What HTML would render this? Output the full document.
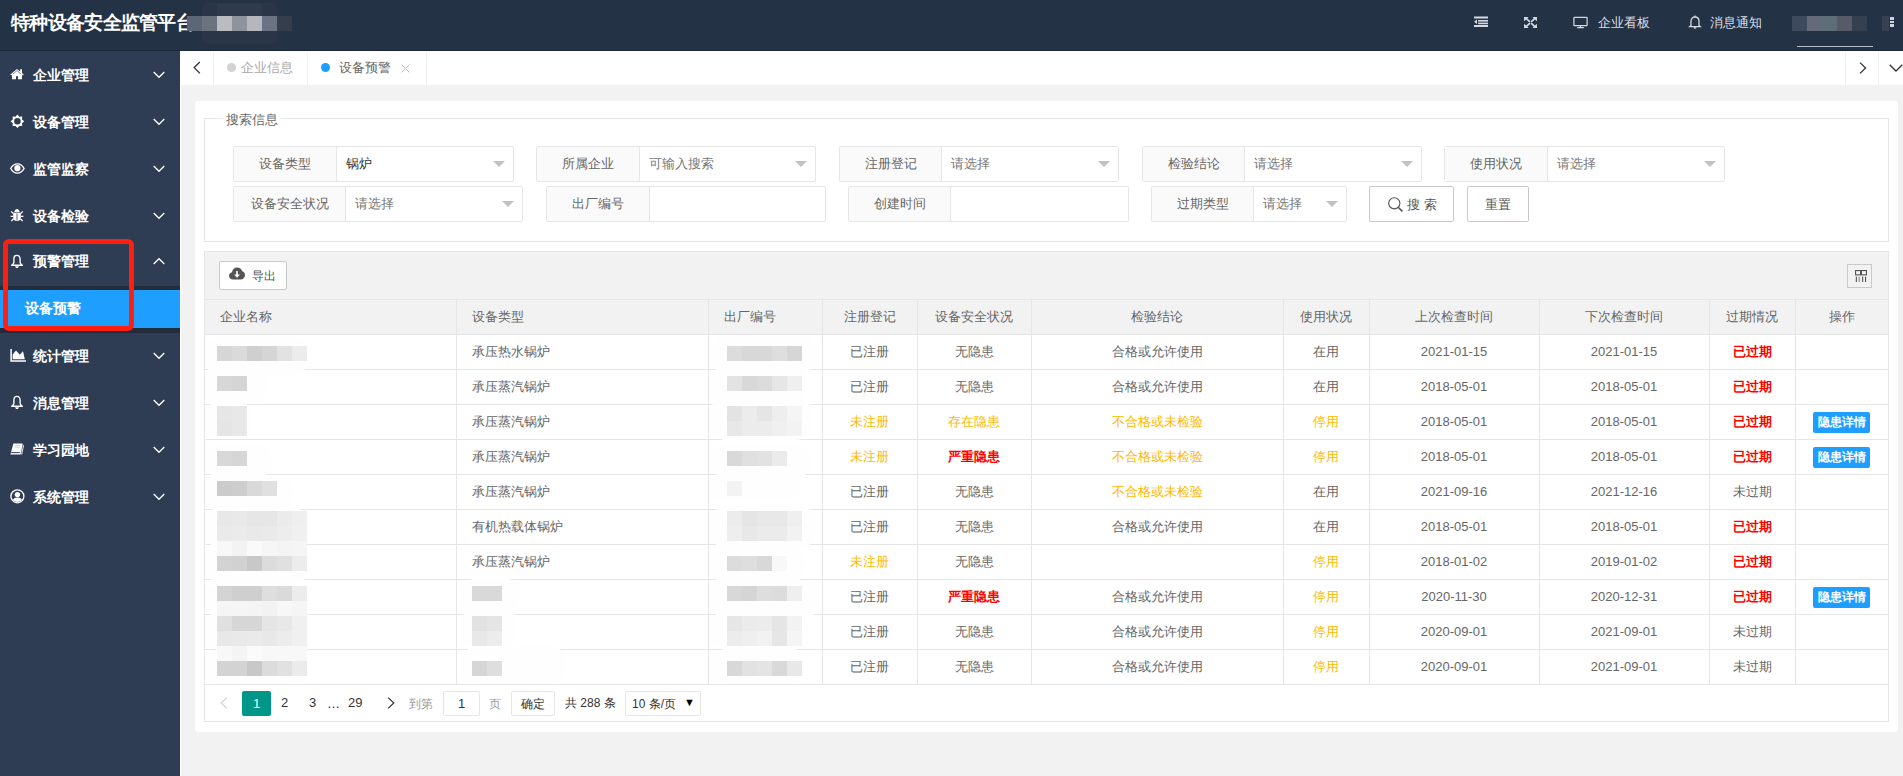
<!DOCTYPE html>
<html><head><meta charset="utf-8"><title>特种设备安全监管平台</title>
<style>
*{margin:0;padding:0;box-sizing:border-box}
html,body{width:1903px;height:776px;overflow:hidden;background:#f2f2f2;font-family:"Liberation Sans",sans-serif;font-size:13px;color:#666}
div,span,svg{position:absolute}
.nw{white-space:nowrap}
#hdr{left:0;top:0;width:1903px;height:51px;background:#243246;border-bottom:1px solid #1d2838}
#title{left:11px;top:10px;font-size:19px;font-weight:bold;color:#fff;line-height:26px;white-space:nowrap;letter-spacing:-0.7px}
.ht{color:#d9dde3;font-size:13px;line-height:20px;top:13px;white-space:nowrap}
#side{left:0;top:51px;width:180px;height:725px;background:#2f3d54}
.mi{left:0;width:180px;height:47px;color:#fff;font-size:14px;font-weight:bold}
.mi .t{left:33px;top:13px;line-height:22px;white-space:nowrap}
.mi svg.ic{}
.mi svg.ch{left:153px;top:20px}
#tabs{left:180px;top:51px;width:1723px;height:34px;background:#fff}
.sep{top:1px;width:1px;height:33px;background:#f0f0f0}
#card{left:195px;top:101px;width:1703px;height:631px;background:#fff;border-radius:3px}
.fs{left:9px;top:17px;width:1685px;height:124px;border:1px solid #e6e6e6}
.lg{left:21px;top:8px;padding:0 10px 0 10px;background:#fff;color:#666;font-size:13px;line-height:18px}
.fl{height:36px;border:1px solid #e6e6e6;border-radius:2px;background:#fff}
.fl .lb{left:0;top:0;height:34px;background:#fafafa;border-right:1px solid #e6e6e6;color:#666;text-align:center;line-height:34px;font-size:13px;white-space:nowrap}
.fl .v{top:0;line-height:34px;font-size:13px;color:#999;white-space:nowrap}
.tri{width:0;height:0;border-left:6px solid transparent;border-right:6px solid transparent;border-top:6px solid #c2c2c2;top:14px}
.btn{height:36px;border:1px solid #c9c9c9;border-radius:2px;background:#fff;color:#555;font-size:13px;line-height:34px;text-align:center;white-space:nowrap}
#tb{left:9px;top:150px;width:1685px;height:48px;background:#f2f2f2;border:1px solid #e6e6e6;border-bottom:none}
.th{top:198px;height:36px;background:#f2f2f2;border-top:1px solid #e6e6e6;border-bottom:1px solid #e6e6e6;color:#666;line-height:34px;white-space:nowrap}
.td{height:35px;border-bottom:1px solid #e6e6e6;line-height:34px;color:#666;white-space:nowrap}
.vl{width:1px;background:#e6e6e6}
.c{text-align:center}
.o{color:#ffb800}
.r{color:#ff0000;font-weight:bold}
.bd{height:21px;width:57px;background:#1e9fff;color:#fff;border-radius:2px;font-size:12px;line-height:21px;text-align:center;font-weight:bold;white-space:nowrap}
.bl{width:15px;height:15px}
.pg{color:#333;font-size:13px;line-height:24px;white-space:nowrap}
</style></head><body>

<div id="hdr">
<div id="title">特种设备安全监管平台</div>
<div style="left:202px;top:3px;width:75px;height:41px;background:#2a3648;border-radius:6px"></div>
<div style="left:217px;top:3px;width:45px;height:13px;background:#2f3b4d"></div>
<div style="left:187px;top:16px;width:15px;height:15px;background:#5d6676"></div>
<div style="left:202px;top:16px;width:15px;height:15px;background:#6b737f"></div>
<div style="left:217px;top:16px;width:15px;height:15px;background:#b9bcc0"></div>
<div style="left:232px;top:16px;width:15px;height:15px;background:#8e939c"></div>
<div style="left:247px;top:16px;width:15px;height:15px;background:#b4b7be"></div>
<div style="left:262px;top:16px;width:15px;height:15px;background:#6a7381"></div>
<div style="left:277px;top:16px;width:15px;height:15px;background:#343e4d"></div>
<svg style="left:1474px;top:16px" width="15" height="12" viewBox="0 0 15 12"><g fill="#d5d9df"><rect x="0" y="0.5" width="14" height="2"/><rect x="4" y="4" width="10" height="1.6"/><rect x="4" y="6.6" width="10" height="1.6"/><rect x="0" y="9" width="14" height="2"/><path d="M0 5.8 L3 3.6 L3 8 Z"/></g></svg>
<svg style="left:1524px;top:17px" width="13" height="11" viewBox="0 0 13 11"><g fill="#d5d9df"><path d="M0 0h4.6L3.3 1.3 6.5 4.2 5.3 5.4 2.1 2.5.1 4.3z"/><path d="M13 0H8.4l1.3 1.3L6.5 4.2l1.2 1.2 3.2-2.9 2 1.8z"/><path d="M0 11h4.6L3.3 9.7 6.5 6.8 5.3 5.6 2.1 8.5.1 6.7z"/><path d="M13 11H8.4l1.3-1.3L6.5 6.8l1.2-1.2 3.2 2.9 2-1.8z"/></g></svg>
<svg style="left:1573px;top:16px" width="15" height="13" viewBox="0 0 15 13"><g fill="none" stroke="#d5d9df" stroke-width="1.2"><rect x="0.9" y="1.3" width="13.2" height="8.4" rx=".6"/><path d="M7.5 9.7v1.8M4.2 11.6h6.6"/></g></svg>
<div class="ht" style="left:1598px">企业看板</div>
<svg style="left:1688px;top:15px" width="14" height="14" viewBox="0 0 14 14"><g fill="none" stroke="#d5d9df" stroke-width="1.3"><path d="M3 10.5V6.3C3 3.8 4.7 2 7 2s4 1.8 4 4.3v4.2l1.3 1.2H1.7z"/><path d="M7 .6v1.4"/></g><path d="M5.5 12.3h3a1.5 1.5 0 0 1-3 0z" fill="#d5d9df"/></svg>
<div class="ht" style="left:1710px">消息通知</div>
<div style="left:1792px;top:16px;width:15px;height:15px;background:#3d4a5e"></div>
<div style="left:1807px;top:16px;width:15px;height:15px;background:#636b7b"></div>
<div style="left:1822px;top:16px;width:15px;height:15px;background:#5e6e78"></div>
<div style="left:1837px;top:16px;width:15px;height:15px;background:#555b69"></div>
<div style="left:1852px;top:16px;width:15px;height:15px;background:#343f4f"></div>
<div style="left:1882px;top:16px;width:7px;height:15px;background:#364253"></div>
<div style="left:1890px;top:17px;width:4px;height:3px;background:#cfd4da"></div>
<div style="left:1890px;top:21px;width:4px;height:2px;background:#cfd4da"></div>
<div style="left:1890px;top:24px;width:4px;height:3px;background:#cfd4da"></div>
<div style="left:1797px;top:46px;width:76px;height:1px;background:#b8bec8"></div>
</div>
<div id="side">
<svg class="ic" style="left:10px;top:17px" width="14" height="12" viewBox="0 0 14 12"><path d="M7 .9 .3 6.6l.8.9L2 6.7V11.2h4V8.3h2v2.9h4V6.7l.9.8.8-.9L12 5.1V1.3h-1.8v2.2z" fill="#fff"/><path d="M7 2.6 2.9 6.1" stroke="#2f3d54" stroke-width=".6" fill="none"/><path d="M7 2.6 11.1 6.1" stroke="#2f3d54" stroke-width=".6" fill="none"/></svg>
<div class="mi" style="top:0px"><span class="t">企业管理</span><svg class="ch" width="12" height="8" viewBox="0 0 12 8"><path d="M.7 1 6 6.3 11.3 1" fill="none" stroke="#fff" stroke-width="1.3"/></svg></div>
<svg class="ic" style="left:10px;top:63px" width="15" height="15" viewBox="0 0 15 15"><path fill-rule="evenodd" fill="#fff" d="M7.40 0.50 L9.31 2.68 L12.21 2.49 L12.02 5.39 L14.20 7.30 L12.02 9.21 L12.21 12.11 L9.31 11.92 L7.40 14.10 L5.49 11.92 L2.59 12.11 L2.78 9.21 L0.60 7.30 L2.78 5.39 L2.59 2.49 L5.49 2.68Z M10.70 7.30 A3.3 3.3 0 1 0 4.10 7.30 A3.3 3.3 0 1 0 10.70 7.30Z"/></svg>
<div class="mi" style="top:47px"><span class="t">设备管理</span><svg class="ch" width="12" height="8" viewBox="0 0 12 8"><path d="M.7 1 6 6.3 11.3 1" fill="none" stroke="#fff" stroke-width="1.3"/></svg></div>
<svg class="ic" style="left:10px;top:112px" width="15" height="11" viewBox="0 0 15 11"><path d="M.7 5.5C2.6 2.1 5 .9 7.4.9s4.8 1.2 6.7 4.6c-1.9 3.4-4.3 4.6-6.7 4.6S2.6 8.9.7 5.5z" fill="none" stroke="#fff" stroke-width="1.4"/><circle cx="7.4" cy="5.2" r="3.1" fill="#fff"/></svg>
<div class="mi" style="top:94px"><span class="t">监管监察</span><svg class="ch" width="12" height="8" viewBox="0 0 12 8"><path d="M.7 1 6 6.3 11.3 1" fill="none" stroke="#fff" stroke-width="1.3"/></svg></div>
<svg class="ic" style="left:10px;top:157px" width="14" height="14" viewBox="0 0 14 14"><g fill="#fff"><path d="M4.4 4.2C4.4 2.4 5.6 1 7 1s2.6 1.4 2.6 3.2z"/><path d="M3.2 4.8h7.6v4.6c0 2.2-1.7 3.6-3.8 3.6S3.2 11.6 3.2 9.4z"/></g><g stroke="#fff" stroke-width="1.3" fill="none"><path d="M3.4 5.6 1.2 3.4M10.6 5.6l2.2-2.2M.6 8.4h2.8M10.6 8.4h2.8M3.6 10.8 1.4 13M10.4 10.8l2.2 2.2"/></g><path d="M7 5.4v7" stroke="#2f3d54" stroke-width=".8"/></svg>
<div class="mi" style="top:141px"><span class="t">设备检验</span><svg class="ch" width="12" height="8" viewBox="0 0 12 8"><path d="M.7 1 6 6.3 11.3 1" fill="none" stroke="#fff" stroke-width="1.3"/></svg></div>
<svg class="ic" style="left:10px;top:203px" width="14" height="15" viewBox="0 0 14 15"><path d="M7 1.3C5.1 1.3 3.9 2.9 3.9 5v3.4c0 1.1-1 1.9-2.3 2.8h10.8c-1.3-.9-2.3-1.7-2.3-2.8V5C10.1 2.9 8.9 1.3 7 1.3z" fill="none" stroke="#fff" stroke-width="1.35" stroke-linejoin="round"/><path d="M5.2 12.2h3.6c0 1.1-.8 1.8-1.8 1.8s-1.8-.7-1.8-1.8z" fill="#fff"/></svg>
<div class="mi" style="top:186px"><span class="t">预警管理</span><svg class="ch" width="12" height="8" viewBox="0 0 12 8"><path d="M.7 7 6 1.7 11.3 7" fill="none" stroke="#fff" stroke-width="1.3"/></svg></div>
<div style="left:0;top:235px;width:180px;height:47px;background:#222c3a"></div>
<div style="left:0;top:239px;width:180px;height:38px;background:#1e9fff"></div>
<div class="nw" style="left:25px;top:246px;color:#fff;font-size:14px;font-weight:bold;line-height:22px">设备预警</div>
<svg class="ic" style="left:10px;top:297px" width="17" height="14" viewBox="0 0 17 14"><path d="M1.1 1v11.9H16" fill="none" stroke="#fff" stroke-width="1.5"/><path d="M2.7 11.2V6.4L6 2.5l3.8 4.2 3.2-3.4 1.8 7.9z" fill="#fff"/></svg>
<div class="mi" style="top:281px"><span class="t">统计管理</span><svg class="ch" width="12" height="8" viewBox="0 0 12 8"><path d="M.7 1 6 6.3 11.3 1" fill="none" stroke="#fff" stroke-width="1.3"/></svg></div>
<svg class="ic" style="left:10px;top:344px" width="14" height="15" viewBox="0 0 14 15"><path d="M7 1.3C5.1 1.3 3.9 2.9 3.9 5v3.4c0 1.1-1 1.9-2.3 2.8h10.8c-1.3-.9-2.3-1.7-2.3-2.8V5C10.1 2.9 8.9 1.3 7 1.3z" fill="none" stroke="#fff" stroke-width="1.35" stroke-linejoin="round"/><path d="M5.2 12.2h3.6c0 1.1-.8 1.8-1.8 1.8s-1.8-.7-1.8-1.8z" fill="#fff"/></svg>
<div class="mi" style="top:328px"><span class="t">消息管理</span><svg class="ch" width="12" height="8" viewBox="0 0 12 8"><path d="M.7 1 6 6.3 11.3 1" fill="none" stroke="#fff" stroke-width="1.3"/></svg></div>
<svg class="ic" style="left:10px;top:392px" width="15" height="13" viewBox="0 0 15 13"><path d="M3.4.4h9.4L10.6 11.6H.4z" fill="#fff"/><path d="M1.2 9.6h8.6" stroke="#2f3d54" stroke-width="1"/><path d="M5 2.6h5.2M4.6 4.2h5.2" stroke="#c8ccd2" stroke-width=".9"/><path d="M13.6 2.2 11.6 11.6" stroke="#fff" stroke-width=".9"/></svg>
<div class="mi" style="top:375px"><span class="t">学习园地</span><svg class="ch" width="12" height="8" viewBox="0 0 12 8"><path d="M.7 1 6 6.3 11.3 1" fill="none" stroke="#fff" stroke-width="1.3"/></svg></div>
<svg class="ic" style="left:10px;top:438px" width="15" height="15" viewBox="0 0 15 15"><defs><clipPath id="uc"><circle cx="7.4" cy="7.3" r="5.7"/></clipPath></defs><circle cx="7.4" cy="7.3" r="6.5" fill="none" stroke="#fff" stroke-width="1.3"/><circle cx="7.4" cy="5.6" r="2.7" fill="#fff"/><g clip-path="url(#uc)"><ellipse cx="7.4" cy="12.6" rx="5.2" ry="4" fill="#fff"/></g></svg>
<div class="mi" style="top:422px"><span class="t">系统管理</span><svg class="ch" width="12" height="8" viewBox="0 0 12 8"><path d="M.7 1 6 6.3 11.3 1" fill="none" stroke="#fff" stroke-width="1.3"/></svg></div>
<div style="left:3px;top:188px;width:131px;height:92px;border:5px solid #fe1f10;border-radius:6px"></div>
</div>
<div style="left:180px;top:85px;width:1px;height:691px;background:#fff"></div>
<div id="tabs">
<svg style="left:13px;top:10px" width="8" height="13" viewBox="0 0 8 13"><path d="M6.8 1 1.2 6.6 6.8 12.2" fill="none" stroke="#333" stroke-width="1.3"/></svg>
<div class="sep" style="left:33px"></div>
<div style="left:47px;top:12px;width:9px;height:9px;border-radius:50%;background:#d2d2d2"></div>
<div class="nw" style="left:61px;top:7px;color:#aaa;line-height:20px">企业信息</div>
<div class="sep" style="left:127px"></div>
<div style="left:141px;top:12px;width:9px;height:9px;border-radius:50%;background:#1e9fff"></div>
<div class="nw" style="left:159px;top:7px;color:#666;line-height:20px">设备预警</div>
<svg style="left:221px;top:13px" width="9" height="9" viewBox="0 0 9 9"><path d="M.5.5l8 8M8.5.5l-8 8" stroke="#bbb" stroke-width="1"/></svg>
<div class="sep" style="left:246px"></div>
<div class="sep" style="left:1665px"></div>
<svg style="left:1679px;top:11px" width="8" height="12" viewBox="0 0 8 12"><path d="M1 .6 6.6 6 1 11.4" fill="none" stroke="#333" stroke-width="1.3"/></svg>
<div class="sep" style="left:1698px"></div>
<svg style="left:1709px;top:13px" width="14" height="8" viewBox="0 0 14 8"><path d="M.7.7 7 7 13.3.7" fill="none" stroke="#333" stroke-width="1.3"/></svg>
</div>
<div id="card"></div>
<div style="left:204px;top:118px;width:1685px;height:124px;border:1px solid #e6e6e6"></div>
<div class="nw" style="left:223px;top:111px;padding:0 3px;background:#fff;color:#666;line-height:18px;height:14px">搜索信息</div>
<div class="fl" style="left:233px;top:146px;width:281px"><div class="lb" style="width:103px">设备类型</div><div class="v" style="left:112px;color:#333">锅炉</div><div class="tri" style="left:259px"></div></div>
<div class="fl" style="left:536px;top:146px;width:280px"><div class="lb" style="width:103px">所属企业</div><div class="v" style="left:112px;color:#777">可输入搜索</div><div class="tri" style="left:258px"></div></div>
<div class="fl" style="left:839px;top:146px;width:280px"><div class="lb" style="width:102px">注册登记</div><div class="v" style="left:111px;color:#777">请选择</div><div class="tri" style="left:258px"></div></div>
<div class="fl" style="left:1142px;top:146px;width:280px"><div class="lb" style="width:102px">检验结论</div><div class="v" style="left:111px;color:#777">请选择</div><div class="tri" style="left:258px"></div></div>
<div class="fl" style="left:1444px;top:146px;width:281px"><div class="lb" style="width:103px">使用状况</div><div class="v" style="left:112px;color:#777">请选择</div><div class="tri" style="left:259px"></div></div>
<div class="fl" style="left:233px;top:186px;width:290px"><div class="lb" style="width:112px">设备安全状况</div><div class="v" style="left:121px;color:#777">请选择</div><div class="tri" style="left:268px"></div></div>
<div class="fl" style="left:546px;top:186px;width:280px"><div class="lb" style="width:103px">出厂编号</div></div>
<div class="fl" style="left:848px;top:186px;width:281px"><div class="lb" style="width:102px">创建时间</div></div>
<div class="fl" style="left:1151px;top:186px;width:196px"><div class="lb" style="width:102px">过期类型</div><div class="v" style="left:111px;color:#777">请选择</div><div class="tri" style="left:174px"></div></div>
<div class="btn" style="left:1369px;top:186px;width:85px"></div>
<svg style="left:1388px;top:197px" width="16" height="16" viewBox="0 0 16 16"><circle cx="6.3" cy="6.3" r="5.6" fill="none" stroke="#555" stroke-width="1.1"/><path d="M10.2 10.2l4.2 4.2" stroke="#555" stroke-width="1.6"/></svg>
<div class="nw" style="left:1407px;top:195px;color:#555;line-height:20px;letter-spacing:4px">搜索</div>
<div class="btn" style="left:1467px;top:186px;width:62px;line-height:36px">重置</div>
<div style="left:204px;top:251px;width:1685px;height:48px;background:#f2f2f2;border:1px solid #e6e6e6;border-bottom:none"></div>
<div style="left:219px;top:261px;width:68px;height:29px;background:#fff;border:1px solid #c9c9c9;border-radius:2px"></div>
<svg style="left:229px;top:267px" width="16" height="13" viewBox="0 0 16 13"><path d="M4 12.5C1.8 12.5 0 10.9 0 8.8c0-1.8 1.3-3.3 3-3.6C3.4 2.4 5.6.5 8.2.5c2.4 0 4.4 1.6 5 3.8 1.6.4 2.8 1.9 2.8 3.7 0 2.5-2 4.5-4.5 4.5z" fill="#555"/><path d="M7.2 4h1.6v3.6h2.1L8 10.8 5.1 7.6h2.1z" fill="#fff"/></svg>
<div class="nw" style="left:252px;top:266px;color:#555;font-size:12px;line-height:21px">导出</div>
<div style="left:1847px;top:264px;width:25px;height:24px;border:1px solid #c9c9c9;background:#f2f2f2"></div>
<svg style="left:1854px;top:269px" width="14" height="14" viewBox="0 0 14 14"><g fill="none" stroke="#555" stroke-width="1.1"><rect x="1.55" y="1.55" width="5" height="4.3"/><rect x="7.45" y="1.55" width="5" height="4.3"/></g><g fill="#555"><rect x="1.8" y="7.6" width="1.1" height="5.4"/><rect x="4.6" y="7.6" width="1.1" height="5.4" fill="#888"/><rect x="8.1" y="7.6" width="1.1" height="5.4"/><rect x="11" y="7.6" width="1.1" height="5.4"/></g></svg>
<div style="left:204px;top:299px;width:1685px;height:36px;background:#f2f2f2;border-top:1px solid #e6e6e6;border-bottom:1px solid #e6e6e6"></div>
<div style="left:204px;top:335px;width:1685px;height:350px;background:#fff"></div>
<div style="left:204px;top:369px;width:1685px;height:1px;background:#e6e6e6"></div>
<div style="left:204px;top:404px;width:1685px;height:1px;background:#e6e6e6"></div>
<div style="left:204px;top:439px;width:1685px;height:1px;background:#e6e6e6"></div>
<div style="left:204px;top:474px;width:1685px;height:1px;background:#e6e6e6"></div>
<div style="left:204px;top:509px;width:1685px;height:1px;background:#e6e6e6"></div>
<div style="left:204px;top:544px;width:1685px;height:1px;background:#e6e6e6"></div>
<div style="left:204px;top:579px;width:1685px;height:1px;background:#e6e6e6"></div>
<div style="left:204px;top:614px;width:1685px;height:1px;background:#e6e6e6"></div>
<div style="left:204px;top:649px;width:1685px;height:1px;background:#e6e6e6"></div>
<div style="left:204px;top:684px;width:1685px;height:1px;background:#e6e6e6"></div>
<div class="vl" style="left:204px;top:299px;height:386px"></div>
<div class="vl" style="left:456px;top:299px;height:386px"></div>
<div class="vl" style="left:708px;top:299px;height:386px"></div>
<div class="vl" style="left:822px;top:299px;height:386px"></div>
<div class="vl" style="left:917px;top:299px;height:386px"></div>
<div class="vl" style="left:1031px;top:299px;height:386px"></div>
<div class="vl" style="left:1283px;top:299px;height:386px"></div>
<div class="vl" style="left:1369px;top:299px;height:386px"></div>
<div class="vl" style="left:1539px;top:299px;height:386px"></div>
<div class="vl" style="left:1709px;top:299px;height:386px"></div>
<div class="vl" style="left:1795px;top:299px;height:386px"></div>
<div class="vl" style="left:1888px;top:299px;height:386px"></div>
<div class="nw" style="left:220px;top:307px;line-height:20px;color:#666">企业名称</div>
<div class="nw" style="left:472px;top:307px;line-height:20px;color:#666">设备类型</div>
<div class="nw" style="left:724px;top:307px;line-height:20px;color:#666">出厂编号</div>
<div class="nw c" style="left:822px;top:307px;width:95px;line-height:20px;color:#666">注册登记</div>
<div class="nw c" style="left:917px;top:307px;width:114px;line-height:20px;color:#666">设备安全状况</div>
<div class="nw c" style="left:1031px;top:307px;width:252px;line-height:20px;color:#666">检验结论</div>
<div class="nw c" style="left:1283px;top:307px;width:86px;line-height:20px;color:#666">使用状况</div>
<div class="nw c" style="left:1369px;top:307px;width:170px;line-height:20px;color:#666">上次检查时间</div>
<div class="nw c" style="left:1539px;top:307px;width:170px;line-height:20px;color:#666">下次检查时间</div>
<div class="nw c" style="left:1709px;top:307px;width:86px;line-height:20px;color:#666">过期情况</div>
<div class="nw c" style="left:1795px;top:307px;width:93px;line-height:20px;color:#666">操作</div>
<div class="nw" style="left:472px;top:342px;line-height:20px">承压热水锅炉</div>
<div class="nw c" style="left:822px;top:342px;width:95px;line-height:20px">已注册</div>
<div class="nw c" style="left:917px;top:342px;width:114px;line-height:20px">无隐患</div>
<div class="nw c" style="left:1031px;top:342px;width:252px;line-height:20px">合格或允许使用</div>
<div class="nw c" style="left:1283px;top:342px;width:86px;line-height:20px">在用</div>
<div class="nw c" style="left:1369px;top:342px;width:170px;line-height:20px">2021-01-15</div>
<div class="nw c" style="left:1539px;top:342px;width:170px;line-height:20px">2021-01-15</div>
<div class="nw c r" style="left:1709px;top:342px;width:86px;line-height:20px">已过期</div>
<div class="nw" style="left:472px;top:377px;line-height:20px">承压蒸汽锅炉</div>
<div class="nw c" style="left:822px;top:377px;width:95px;line-height:20px">已注册</div>
<div class="nw c" style="left:917px;top:377px;width:114px;line-height:20px">无隐患</div>
<div class="nw c" style="left:1031px;top:377px;width:252px;line-height:20px">合格或允许使用</div>
<div class="nw c" style="left:1283px;top:377px;width:86px;line-height:20px">在用</div>
<div class="nw c" style="left:1369px;top:377px;width:170px;line-height:20px">2018-05-01</div>
<div class="nw c" style="left:1539px;top:377px;width:170px;line-height:20px">2018-05-01</div>
<div class="nw c r" style="left:1709px;top:377px;width:86px;line-height:20px">已过期</div>
<div class="nw" style="left:472px;top:412px;line-height:20px">承压蒸汽锅炉</div>
<div class="nw c o" style="left:822px;top:412px;width:95px;line-height:20px">未注册</div>
<div class="nw c o" style="left:917px;top:412px;width:114px;line-height:20px">存在隐患</div>
<div class="nw c o" style="left:1031px;top:412px;width:252px;line-height:20px">不合格或未检验</div>
<div class="nw c o" style="left:1283px;top:412px;width:86px;line-height:20px">停用</div>
<div class="nw c" style="left:1369px;top:412px;width:170px;line-height:20px">2018-05-01</div>
<div class="nw c" style="left:1539px;top:412px;width:170px;line-height:20px">2018-05-01</div>
<div class="nw c r" style="left:1709px;top:412px;width:86px;line-height:20px">已过期</div>
<div class="bd" style="left:1813px;top:412px">隐患详情</div>
<div class="nw" style="left:472px;top:447px;line-height:20px">承压蒸汽锅炉</div>
<div class="nw c o" style="left:822px;top:447px;width:95px;line-height:20px">未注册</div>
<div class="nw c r" style="left:917px;top:447px;width:114px;line-height:20px">严重隐患</div>
<div class="nw c o" style="left:1031px;top:447px;width:252px;line-height:20px">不合格或未检验</div>
<div class="nw c o" style="left:1283px;top:447px;width:86px;line-height:20px">停用</div>
<div class="nw c" style="left:1369px;top:447px;width:170px;line-height:20px">2018-05-01</div>
<div class="nw c" style="left:1539px;top:447px;width:170px;line-height:20px">2018-05-01</div>
<div class="nw c r" style="left:1709px;top:447px;width:86px;line-height:20px">已过期</div>
<div class="bd" style="left:1813px;top:447px">隐患详情</div>
<div class="nw" style="left:472px;top:482px;line-height:20px">承压蒸汽锅炉</div>
<div class="nw c" style="left:822px;top:482px;width:95px;line-height:20px">已注册</div>
<div class="nw c" style="left:917px;top:482px;width:114px;line-height:20px">无隐患</div>
<div class="nw c o" style="left:1031px;top:482px;width:252px;line-height:20px">不合格或未检验</div>
<div class="nw c" style="left:1283px;top:482px;width:86px;line-height:20px">在用</div>
<div class="nw c" style="left:1369px;top:482px;width:170px;line-height:20px">2021-09-16</div>
<div class="nw c" style="left:1539px;top:482px;width:170px;line-height:20px">2021-12-16</div>
<div class="nw c" style="left:1709px;top:482px;width:86px;line-height:20px">未过期</div>
<div class="nw" style="left:472px;top:517px;line-height:20px">有机热载体锅炉</div>
<div class="nw c" style="left:822px;top:517px;width:95px;line-height:20px">已注册</div>
<div class="nw c" style="left:917px;top:517px;width:114px;line-height:20px">无隐患</div>
<div class="nw c" style="left:1031px;top:517px;width:252px;line-height:20px">合格或允许使用</div>
<div class="nw c" style="left:1283px;top:517px;width:86px;line-height:20px">在用</div>
<div class="nw c" style="left:1369px;top:517px;width:170px;line-height:20px">2018-05-01</div>
<div class="nw c" style="left:1539px;top:517px;width:170px;line-height:20px">2018-05-01</div>
<div class="nw c r" style="left:1709px;top:517px;width:86px;line-height:20px">已过期</div>
<div class="nw" style="left:472px;top:552px;line-height:20px">承压蒸汽锅炉</div>
<div class="nw c o" style="left:822px;top:552px;width:95px;line-height:20px">未注册</div>
<div class="nw c" style="left:917px;top:552px;width:114px;line-height:20px">无隐患</div>
<div class="nw c o" style="left:1283px;top:552px;width:86px;line-height:20px">停用</div>
<div class="nw c" style="left:1369px;top:552px;width:170px;line-height:20px">2018-01-02</div>
<div class="nw c" style="left:1539px;top:552px;width:170px;line-height:20px">2019-01-02</div>
<div class="nw c r" style="left:1709px;top:552px;width:86px;line-height:20px">已过期</div>
<div class="nw c" style="left:822px;top:587px;width:95px;line-height:20px">已注册</div>
<div class="nw c r" style="left:917px;top:587px;width:114px;line-height:20px">严重隐患</div>
<div class="nw c" style="left:1031px;top:587px;width:252px;line-height:20px">合格或允许使用</div>
<div class="nw c o" style="left:1283px;top:587px;width:86px;line-height:20px">停用</div>
<div class="nw c" style="left:1369px;top:587px;width:170px;line-height:20px">2020-11-30</div>
<div class="nw c" style="left:1539px;top:587px;width:170px;line-height:20px">2020-12-31</div>
<div class="nw c r" style="left:1709px;top:587px;width:86px;line-height:20px">已过期</div>
<div class="bd" style="left:1813px;top:587px">隐患详情</div>
<div class="nw c" style="left:822px;top:622px;width:95px;line-height:20px">已注册</div>
<div class="nw c" style="left:917px;top:622px;width:114px;line-height:20px">无隐患</div>
<div class="nw c" style="left:1031px;top:622px;width:252px;line-height:20px">合格或允许使用</div>
<div class="nw c o" style="left:1283px;top:622px;width:86px;line-height:20px">停用</div>
<div class="nw c" style="left:1369px;top:622px;width:170px;line-height:20px">2020-09-01</div>
<div class="nw c" style="left:1539px;top:622px;width:170px;line-height:20px">2021-09-01</div>
<div class="nw c" style="left:1709px;top:622px;width:86px;line-height:20px">未过期</div>
<div class="nw c" style="left:822px;top:657px;width:95px;line-height:20px">已注册</div>
<div class="nw c" style="left:917px;top:657px;width:114px;line-height:20px">无隐患</div>
<div class="nw c" style="left:1031px;top:657px;width:252px;line-height:20px">合格或允许使用</div>
<div class="nw c o" style="left:1283px;top:657px;width:86px;line-height:20px">停用</div>
<div class="nw c" style="left:1369px;top:657px;width:170px;line-height:20px">2020-09-01</div>
<div class="nw c" style="left:1539px;top:657px;width:170px;line-height:20px">2021-09-01</div>
<div class="nw c" style="left:1709px;top:657px;width:86px;line-height:20px">未过期</div>
<div style="left:205px;top:336px;width:103px;height:40px;background:#fefefe;border-radius:16px"></div>
<div style="left:205px;top:365px;width:61px;height:39px;background:#fefefe;border-radius:16px"></div>
<div style="left:205px;top:400px;width:47px;height:36px;background:#fefefe;border-radius:16px"></div>
<div style="left:205px;top:444px;width:67px;height:34px;background:#fefefe;border-radius:16px"></div>
<div style="left:205px;top:476px;width:89px;height:36px;background:#fefefe;border-radius:16px"></div>
<div style="left:205px;top:507px;width:103px;height:41px;background:#fefefe;border-radius:16px"></div>
<div style="left:205px;top:546px;width:105px;height:37px;background:#fefefe;border-radius:16px"></div>
<div style="left:205px;top:583px;width:105px;height:35px;background:#fefefe;border-radius:16px"></div>
<div style="left:205px;top:611px;width:103px;height:39px;background:#fefefe;border-radius:16px"></div>
<div style="left:205px;top:649px;width:101px;height:35px;background:#fefefe;border-radius:16px"></div>
<div style="left:710px;top:336px;width:108px;height:36px;background:#fefefe;border-radius:16px"></div>
<div style="left:710px;top:366px;width:96px;height:38px;background:#fefefe;border-radius:16px"></div>
<div style="left:710px;top:397px;width:102px;height:43px;background:#fefefe;border-radius:16px"></div>
<div style="left:710px;top:444px;width:102px;height:34px;background:#fefefe;border-radius:16px"></div>
<div style="left:710px;top:474px;width:90px;height:26px;background:#fefefe;border-radius:16px"></div>
<div style="left:710px;top:506px;width:106px;height:42px;background:#fefefe;border-radius:16px"></div>
<div style="left:710px;top:547px;width:96px;height:36px;background:#fefefe;border-radius:16px"></div>
<div style="left:710px;top:580px;width:110px;height:38px;background:#fefefe;border-radius:16px"></div>
<div style="left:710px;top:611px;width:98px;height:39px;background:#fefefe;border-radius:16px"></div>
<div style="left:710px;top:650px;width:96px;height:34px;background:#fefefe;border-radius:16px"></div>
<div style="left:462px;top:578px;width:58px;height:35px;background:#fefefe;border-radius:16px"></div>
<div style="left:462px;top:606px;width:54px;height:44px;background:#fefefe;border-radius:16px"></div>
<div style="left:462px;top:646px;width:104px;height:38px;background:#fefefe;border-radius:16px"></div>
<div class="bl" style="left:217px;top:346px;background:#d6d6d6"></div>
<div class="bl" style="left:232px;top:346px;background:#dadada"></div>
<div class="bl" style="left:247px;top:346px;background:#cfcfcf"></div>
<div class="bl" style="left:262px;top:346px;background:#d5d5d5"></div>
<div class="bl" style="left:277px;top:346px;background:#e2e2e2"></div>
<div class="bl" style="left:292px;top:346px;background:#ececec"></div>
<div class="bl" style="left:217px;top:376px;background:#d7d7d7"></div>
<div class="bl" style="left:232px;top:376px;background:#d5d5d5"></div>
<div class="bl" style="left:217px;top:406px;background:#e6e6e6"></div>
<div class="bl" style="left:232px;top:406px;background:#e8e8e8"></div>
<div class="bl" style="left:217px;top:421px;background:#e5e5e5"></div>
<div class="bl" style="left:232px;top:421px;background:#e8e8e8"></div>
<div class="bl" style="left:217px;top:451px;background:#d8d8d8"></div>
<div class="bl" style="left:232px;top:451px;background:#d6d6d6"></div>
<div class="bl" style="left:217px;top:481px;background:#cbcbcb"></div>
<div class="bl" style="left:232px;top:481px;background:#cdcdcd"></div>
<div class="bl" style="left:247px;top:481px;background:#d9d9d9"></div>
<div class="bl" style="left:262px;top:481px;background:#e0e0e0"></div>
<div class="bl" style="left:217px;top:511px;background:#e8e8e8"></div>
<div class="bl" style="left:232px;top:511px;background:#e9e9e9"></div>
<div class="bl" style="left:247px;top:511px;background:#e6e6e6"></div>
<div class="bl" style="left:262px;top:511px;background:#e6e6e6"></div>
<div class="bl" style="left:277px;top:511px;background:#ebebeb"></div>
<div class="bl" style="left:292px;top:511px;background:#efefef"></div>
<div class="bl" style="left:217px;top:526px;background:#eaeaea"></div>
<div class="bl" style="left:232px;top:526px;background:#ebebeb"></div>
<div class="bl" style="left:247px;top:526px;background:#e9e9e9"></div>
<div class="bl" style="left:262px;top:526px;background:#eaeaea"></div>
<div class="bl" style="left:277px;top:526px;background:#ededed"></div>
<div class="bl" style="left:292px;top:526px;background:#f0f0f0"></div>
<div class="bl" style="left:217px;top:541px;background:#f8f8f8"></div>
<div class="bl" style="left:232px;top:541px;background:#f3f3f3"></div>
<div class="bl" style="left:247px;top:541px;background:#fafafa"></div>
<div class="bl" style="left:262px;top:541px;background:#f6f6f6"></div>
<div class="bl" style="left:277px;top:541px;background:#f4f4f4"></div>
<div class="bl" style="left:292px;top:541px;background:#f5f5f5"></div>
<div class="bl" style="left:217px;top:556px;background:#d3d3d3"></div>
<div class="bl" style="left:232px;top:556px;background:#d1d1d1"></div>
<div class="bl" style="left:247px;top:556px;background:#c8c8c8"></div>
<div class="bl" style="left:262px;top:556px;background:#dcdcdc"></div>
<div class="bl" style="left:277px;top:556px;background:#e0e0e0"></div>
<div class="bl" style="left:292px;top:556px;background:#ececec"></div>
<div class="bl" style="left:217px;top:586px;background:#d4d4d4"></div>
<div class="bl" style="left:232px;top:586px;background:#cfcfcf"></div>
<div class="bl" style="left:247px;top:586px;background:#cfcfcf"></div>
<div class="bl" style="left:262px;top:586px;background:#dedede"></div>
<div class="bl" style="left:277px;top:586px;background:#dadada"></div>
<div class="bl" style="left:292px;top:586px;background:#ececec"></div>
<div class="bl" style="left:217px;top:601px;background:#f5f5f5"></div>
<div class="bl" style="left:232px;top:601px;background:#f5f5f5"></div>
<div class="bl" style="left:247px;top:601px;background:#f4f4f4"></div>
<div class="bl" style="left:262px;top:601px;background:#f2f2f2"></div>
<div class="bl" style="left:277px;top:601px;background:#f7f7f7"></div>
<div class="bl" style="left:292px;top:601px;background:#f5f5f5"></div>
<div class="bl" style="left:217px;top:616px;background:#e0e0e0"></div>
<div class="bl" style="left:232px;top:616px;background:#d6d6d6"></div>
<div class="bl" style="left:247px;top:616px;background:#d6d6d6"></div>
<div class="bl" style="left:262px;top:616px;background:#e5e5e5"></div>
<div class="bl" style="left:277px;top:616px;background:#e8e8e8"></div>
<div class="bl" style="left:292px;top:616px;background:#f0f0f0"></div>
<div class="bl" style="left:217px;top:631px;background:#e8e8e8"></div>
<div class="bl" style="left:232px;top:631px;background:#e9e9e9"></div>
<div class="bl" style="left:247px;top:631px;background:#eaeaea"></div>
<div class="bl" style="left:262px;top:631px;background:#e8e8e8"></div>
<div class="bl" style="left:277px;top:631px;background:#ececec"></div>
<div class="bl" style="left:292px;top:631px;background:#f0f0f0"></div>
<div class="bl" style="left:217px;top:646px;background:#f8f8f8"></div>
<div class="bl" style="left:232px;top:646px;background:#f4f4f4"></div>
<div class="bl" style="left:247px;top:646px;background:#fbfbfb"></div>
<div class="bl" style="left:262px;top:646px;background:#f8f8f8"></div>
<div class="bl" style="left:277px;top:646px;background:#f8f8f8"></div>
<div class="bl" style="left:292px;top:646px;background:#f8f8f8"></div>
<div class="bl" style="left:217px;top:661px;background:#d3d3d3"></div>
<div class="bl" style="left:232px;top:661px;background:#d3d3d3"></div>
<div class="bl" style="left:247px;top:661px;background:#c8c8c8"></div>
<div class="bl" style="left:262px;top:661px;background:#dcdcdc"></div>
<div class="bl" style="left:277px;top:661px;background:#e1e1e1"></div>
<div class="bl" style="left:292px;top:661px;background:#ebebeb"></div>
<div class="bl" style="left:727px;top:346px;background:#dcdcdc"></div>
<div class="bl" style="left:742px;top:346px;background:#d8d8d8"></div>
<div class="bl" style="left:757px;top:346px;background:#d8d8d8"></div>
<div class="bl" style="left:772px;top:346px;background:#dedede"></div>
<div class="bl" style="left:787px;top:346px;background:#d6d6d6"></div>
<div class="bl" style="left:727px;top:376px;background:#e3e3e3"></div>
<div class="bl" style="left:742px;top:376px;background:#d8d8d8"></div>
<div class="bl" style="left:757px;top:376px;background:#dcdcdc"></div>
<div class="bl" style="left:772px;top:376px;background:#e6e6e6"></div>
<div class="bl" style="left:787px;top:376px;background:#efefef"></div>
<div class="bl" style="left:727px;top:406px;background:#e3e3e3"></div>
<div class="bl" style="left:742px;top:406px;background:#ececec"></div>
<div class="bl" style="left:757px;top:406px;background:#e5e5e5"></div>
<div class="bl" style="left:772px;top:406px;background:#eeeeee"></div>
<div class="bl" style="left:787px;top:406px;background:#f5f5f5"></div>
<div class="bl" style="left:727px;top:421px;background:#e8e8e8"></div>
<div class="bl" style="left:742px;top:421px;background:#ececec"></div>
<div class="bl" style="left:757px;top:421px;background:#ececec"></div>
<div class="bl" style="left:772px;top:421px;background:#f0f0f0"></div>
<div class="bl" style="left:787px;top:421px;background:#f3f3f3"></div>
<div class="bl" style="left:727px;top:451px;background:#d9d9d9"></div>
<div class="bl" style="left:742px;top:451px;background:#e0e0e0"></div>
<div class="bl" style="left:757px;top:451px;background:#e2e2e2"></div>
<div class="bl" style="left:772px;top:451px;background:#ebebeb"></div>
<div class="bl" style="left:727px;top:481px;background:#f3f3f3"></div>
<div class="bl" style="left:727px;top:511px;background:#ececec"></div>
<div class="bl" style="left:742px;top:511px;background:#e5e5e5"></div>
<div class="bl" style="left:757px;top:511px;background:#e8e8e8"></div>
<div class="bl" style="left:772px;top:511px;background:#e8e8e8"></div>
<div class="bl" style="left:787px;top:511px;background:#efefef"></div>
<div class="bl" style="left:727px;top:526px;background:#eeeeee"></div>
<div class="bl" style="left:742px;top:526px;background:#e8e8e8"></div>
<div class="bl" style="left:757px;top:526px;background:#ebebeb"></div>
<div class="bl" style="left:772px;top:526px;background:#ebebeb"></div>
<div class="bl" style="left:787px;top:526px;background:#f2f2f2"></div>
<div class="bl" style="left:727px;top:556px;background:#dcdcdc"></div>
<div class="bl" style="left:742px;top:556px;background:#dedede"></div>
<div class="bl" style="left:757px;top:556px;background:#d8d8d8"></div>
<div class="bl" style="left:772px;top:556px;background:#f8f8f8"></div>
<div class="bl" style="left:727px;top:586px;background:#d8d8d8"></div>
<div class="bl" style="left:742px;top:586px;background:#d5d5d5"></div>
<div class="bl" style="left:757px;top:586px;background:#dedede"></div>
<div class="bl" style="left:772px;top:586px;background:#dcdcdc"></div>
<div class="bl" style="left:787px;top:586px;background:#efefef"></div>
<div class="bl" style="left:727px;top:616px;background:#e6e6e6"></div>
<div class="bl" style="left:742px;top:616px;background:#ebebeb"></div>
<div class="bl" style="left:757px;top:616px;background:#ececec"></div>
<div class="bl" style="left:772px;top:616px;background:#e5e5e5"></div>
<div class="bl" style="left:787px;top:616px;background:#f2f2f2"></div>
<div class="bl" style="left:727px;top:631px;background:#ececec"></div>
<div class="bl" style="left:742px;top:631px;background:#efefef"></div>
<div class="bl" style="left:757px;top:631px;background:#f2f2f2"></div>
<div class="bl" style="left:772px;top:631px;background:#e6e6e6"></div>
<div class="bl" style="left:787px;top:631px;background:#f5f5f5"></div>
<div class="bl" style="left:727px;top:661px;background:#d8d8d8"></div>
<div class="bl" style="left:742px;top:661px;background:#e2e2e2"></div>
<div class="bl" style="left:757px;top:661px;background:#e4e4e4"></div>
<div class="bl" style="left:772px;top:661px;background:#d9d9d9"></div>
<div class="bl" style="left:787px;top:661px;background:#e8e8e8"></div>
<div class="bl" style="left:472px;top:586px;background:#d9d9d9"></div>
<div class="bl" style="left:487px;top:586px;background:#d9d9d9"></div>
<div class="bl" style="left:472px;top:616px;background:#e2e2e2"></div>
<div class="bl" style="left:487px;top:616px;background:#e5e5e5"></div>
<div class="bl" style="left:472px;top:631px;background:#e8e8e8"></div>
<div class="bl" style="left:487px;top:631px;background:#ececec"></div>
<div class="bl" style="left:472px;top:661px;background:#d6d6d6"></div>
<div class="bl" style="left:487px;top:661px;background:#dedede"></div>
<div style="left:204px;top:684px;width:1685px;height:38px;border:1px solid #e6e6e6;border-top:none"></div>
<svg style="left:220px;top:697px" width="8" height="12" viewBox="0 0 8 12"><path d="M6.8.6 1.2 6l5.6 5.4" fill="none" stroke="#d2d2d2" stroke-width="1.2"/></svg>
<div style="left:242px;top:691px;width:29px;height:25px;background:#009688;border-radius:2px;color:#fff;text-align:center;line-height:25px;font-size:13px">1</div>
<div class="pg" style="left:281px;top:691px">2</div>
<div class="pg" style="left:309px;top:691px">3</div>
<div class="pg" style="left:327px;top:692px">…</div>
<div class="pg" style="left:348px;top:691px">29</div>
<svg style="left:387px;top:697px" width="8" height="12" viewBox="0 0 8 12"><path d="M1.2.6 6.8 6 1.2 11.4" fill="none" stroke="#333" stroke-width="1.2"/></svg>
<div class="pg" style="left:409px;top:692px;color:#999;font-size:12px">到第</div>
<div style="left:443px;top:691px;width:37px;height:25px;border:1px solid #e6e6e6;border-radius:2px;text-align:center;line-height:23px;color:#333">1</div>
<div class="pg" style="left:489px;top:692px;color:#999;font-size:12px">页</div>
<div style="left:511px;top:691px;width:44px;height:25px;border:1px solid #e6e6e6;border-radius:2px;text-align:center;line-height:24px;color:#333;font-size:12px">确定</div>
<div class="pg" style="left:565px;top:691px;color:#333;font-size:12px">共 288 条</div>
<div style="left:625px;top:691px;width:76px;height:25px;border:1px solid #e6e6e6;border-radius:2px;line-height:24px;color:#333;padding-left:6px;font-size:12px" class="nw">10 条/页</div>
<div class="nw" style="left:684px;top:693px;font-size:11px;color:#000;line-height:18px">▼</div>
</body></html>
